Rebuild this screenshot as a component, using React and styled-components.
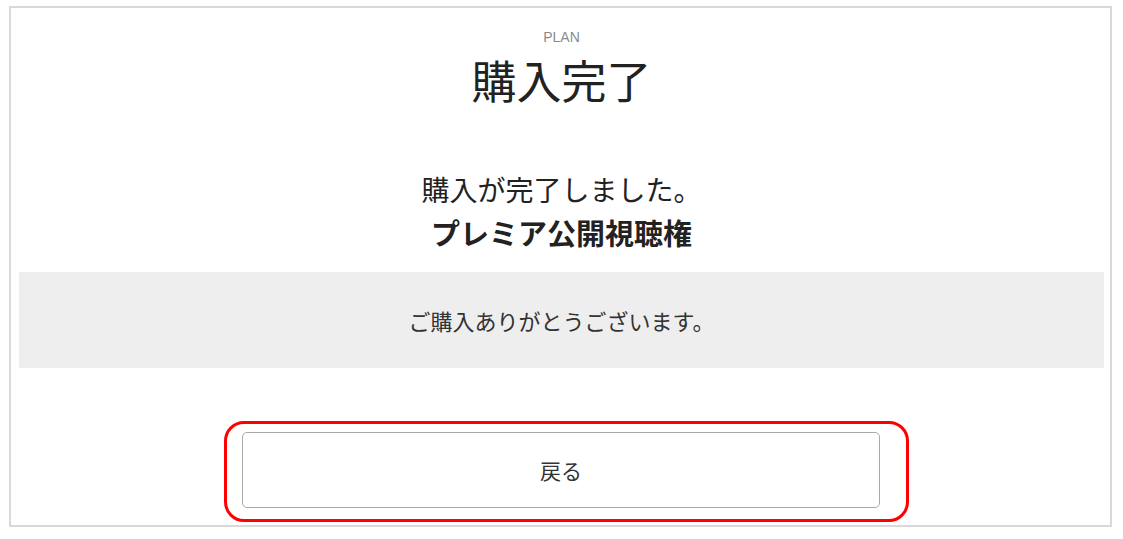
import styled, { createGlobalStyle } from "styled-components";

const GlobalStyle = createGlobalStyle`
  html, body {
    margin: 0;
    padding: 0;
    background: #ffffff;
  }
  body {
    font-family: "Noto Sans CJK JP", "Noto Sans", sans-serif;
    color: #222222;
  }
`;

const Page = styled.div`
  padding: 6px 11px 0 9px;
`;

const Frame = styled.section`
  width: 1103px;
  box-sizing: border-box;
  border: 2px solid #d9d9d9;
  display: flex;
  flex-direction: column;
  padding: 0 6px 17px 8px;
`;

const Header = styled.header`
  display: flex;
  flex-direction: column;
  align-items: center;
  padding-top: 19px;
`;

const Kicker = styled.div`
  font-family: "Liberation Sans", "Noto Sans", sans-serif;
  font-size: 14px;
  line-height: 20px;
  color: #8a8a8a;
`;

const Title = styled.h1`
  margin: 8px 0 0;
  font-size: 45px;
  font-weight: 400;
  line-height: 50px;
  color: #222222;
`;

const Result = styled.div`
  margin-top: 63px;
  display: flex;
  flex-direction: column;
  align-items: center;
`;

const Message = styled.p`
  margin: 0;
  font-size: ${(p) => (p.$bold ? "29px" : "28px")};
  font-weight: ${(p) => (p.$bold ? 700 : 400)};
  line-height: 43px;
  color: #222222;
`;

const ThanksBox = styled.div`
  margin-top: 18px;
  height: 96px;
  background: #eeeeee;
  display: flex;
  align-items: center;
  justify-content: center;
  font-size: 22px;
  color: #333333;
`;

const Actions = styled.div`
  margin-top: 64px;
  display: flex;
  justify-content: center;
  padding-right: 1px;
`;

const ButtonWrap = styled.div`
  position: relative;
  width: 638px;
`;

const Highlight = styled.div`
  position: absolute;
  top: -11px;
  left: -18px;
  right: -29px;
  bottom: -14px;
  border: 3px solid #ff0000;
  border-radius: 20px;
  pointer-events: none;
`;

const BackButton = styled.button`
  display: block;
  width: 100%;
  height: 76px;
  box-sizing: border-box;
  border: 1px solid #a9a9a9;
  border-radius: 5px;
  background: #ffffff;
  font-family: "Noto Sans CJK JP", sans-serif;
  font-size: 21px;
  color: #333333;
  cursor: pointer;
`;

export default function App() {
  return (
    <>
      <GlobalStyle />
      <Page>
        <Frame>
          <Header>
            <Kicker>PLAN</Kicker>
            <Title>購入完了</Title>
          </Header>
          <Result>
            <Message>購入が完了しました。</Message>
            <Message $bold>プレミア公開視聴権</Message>
          </Result>
          <ThanksBox>ご購入ありがとうございます。</ThanksBox>
          <Actions>
            <ButtonWrap>
              <BackButton>戻る</BackButton>
              <Highlight />
            </ButtonWrap>
          </Actions>
        </Frame>
      </Page>
    </>
  );
}
